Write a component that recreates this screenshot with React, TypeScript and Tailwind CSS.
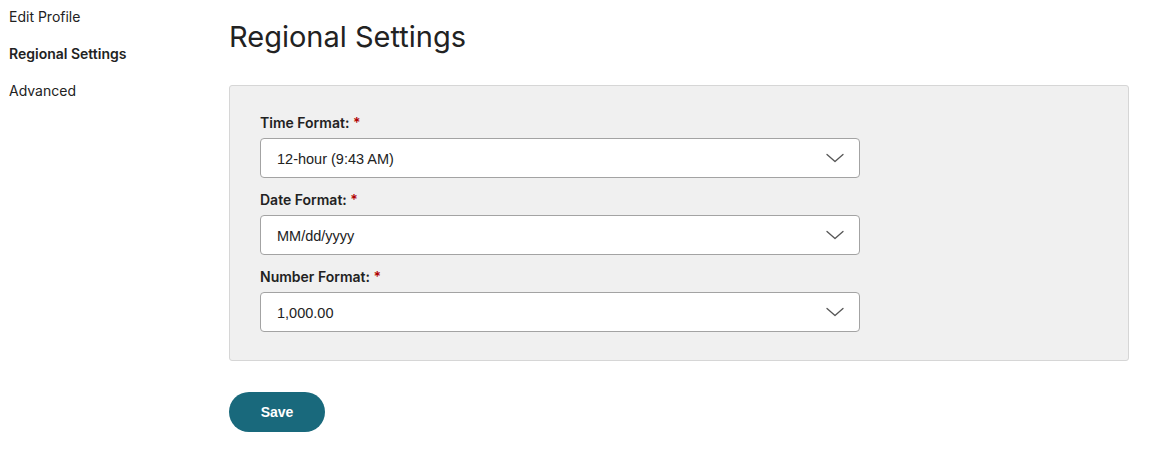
import React, { useState } from "react";

const sans = "font-['Inter','Liberation_Sans',sans-serif]";
const arial = "font-['Liberation_Sans','Arial',sans-serif]";

function Chevron() {
  return (
    <svg width="18" height="10" viewBox="0 0 18 10" fill="none" className="shrink-0">
      <path d="M1 1.5L9 8.5L17 1.5" stroke="#555555" strokeWidth="1.3" strokeLinejoin="round" strokeLinecap="round" />
    </svg>
  );
}

interface FieldProps {
  label: string;
  value: string;
}

function SelectField({ label, value }: FieldProps) {
  return (
    <div className="flex flex-col">
      <label className={`${sans} text-[14px] leading-[20px] font-semibold text-[#222] mb-[5px]`}>
        {label} <span className="text-[#b00000]">*</span>
      </label>
      <div className="w-[600px] h-[40px] bg-white border border-[#a3a3a3] rounded-[4px] flex items-center justify-between pl-[16px] pr-[15px]">
        <span className={`${arial} text-[14.5px] leading-[20px] pt-[1px] text-[#222]`}>{value}</span>
        <Chevron />
      </div>
    </div>
  );
}

export default function App() {
  const [active] = useState("regional");

  const navItems = [
    { id: "profile", label: "Edit Profile" },
    { id: "regional", label: "Regional Settings" },
    { id: "advanced", label: "Advanced" },
  ];

  return (
    <div className="w-[1155px] h-[453px] bg-white flex">
      {/* Sidebar */}
      <nav className="w-[229px] shrink-0 pl-[9px] pt-[7px] flex flex-col gap-[17px]">
        {navItems.map((item) => (
          <a
            key={item.id}
            className={`${sans} text-[14px] leading-[20px] text-[#222] cursor-pointer ${
              active === item.id ? "font-semibold" : "font-normal"
            }`}
          >
            {item.label}
          </a>
        ))}
      </nav>

      {/* Main */}
      <main className="flex flex-col">
        <h1 className={`${sans} text-[29px] leading-[36px] font-normal text-[#222] mt-[19px] mb-[30px]`}>
          Regional Settings
        </h1>

        <div className="w-[900px] bg-[#f0f0f0] border border-[#d6d6d6] rounded-[3px] px-[30px] pt-[27px] pb-[28px] flex flex-col gap-[12px]">
          <SelectField label="Time Format:" value="12-hour (9:43 AM)" />
          <SelectField label="Date Format:" value="MM/dd/yyyy" />
          <SelectField label="Number Format:" value="1,000.00" />
        </div>

        <button
          className={`${arial} mt-[31px] w-[96px] h-[40px] rounded-full bg-[#19697c] text-white text-[14px] font-bold`}
        >
          Save
        </button>
      </main>
    </div>
  );
}
